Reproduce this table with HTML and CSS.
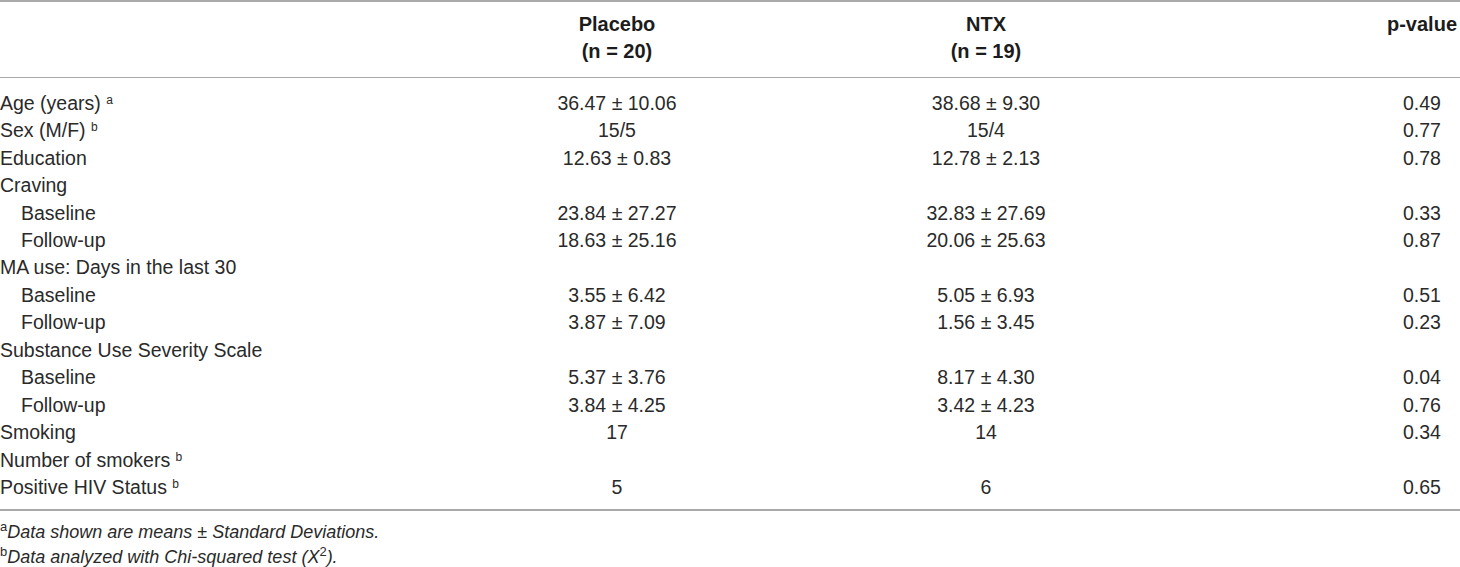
FILE: index.html
```html
<!DOCTYPE html>
<html lang="en">
<head>
<meta charset="utf-8">
<title>Table</title>
<link rel="stylesheet" href="styles.css">
</head>
<body>
<div class="wrap">
<table class="tbl">
  <colgroup>
    <col class="c-label">
    <col class="c-placebo">
    <col class="c-ntx">
    <col class="c-p">
  </colgroup>
  <thead>
    <tr>
      <th class="label"></th>
      <th>Placebo<br>(n = 20)</th>
      <th>NTX<br>(n = 19)</th>
      <th class="pv">p-value</th>
    </tr>
  </thead>
  <tbody>
    <tr class="first"><td class="label">Age (years) <sup>a</sup></td><td>36.47 ± 10.06</td><td>38.68 ± 9.30</td><td class="pv">0.49</td></tr>
    <tr><td class="label">Sex (M/F) <sup>b</sup></td><td>15/5</td><td>15/4</td><td class="pv">0.77</td></tr>
    <tr><td class="label">Education</td><td>12.63 ± 0.83</td><td>12.78 ± 2.13</td><td class="pv">0.78</td></tr>
    <tr><td class="label">Craving</td><td></td><td></td><td class="pv"></td></tr>
    <tr><td class="label sub">Baseline</td><td>23.84 ± 27.27</td><td>32.83 ± 27.69</td><td class="pv">0.33</td></tr>
    <tr><td class="label sub">Follow-up</td><td>18.63 ± 25.16</td><td>20.06 ± 25.63</td><td class="pv">0.87</td></tr>
    <tr><td class="label">MA use: Days in the last 30</td><td></td><td></td><td class="pv"></td></tr>
    <tr><td class="label sub">Baseline</td><td>3.55 ± 6.42</td><td>5.05 ± 6.93</td><td class="pv">0.51</td></tr>
    <tr><td class="label sub">Follow-up</td><td>3.87 ± 7.09</td><td>1.56 ± 3.45</td><td class="pv">0.23</td></tr>
    <tr><td class="label">Substance Use Severity Scale</td><td></td><td></td><td class="pv"></td></tr>
    <tr><td class="label sub">Baseline</td><td>5.37 ± 3.76</td><td>8.17 ± 4.30</td><td class="pv">0.04</td></tr>
    <tr><td class="label sub">Follow-up</td><td>3.84 ± 4.25</td><td>3.42 ± 4.23</td><td class="pv">0.76</td></tr>
    <tr><td class="label">Smoking</td><td>17</td><td>14</td><td class="pv">0.34</td></tr>
    <tr><td class="label">Number of smokers <sup>b</sup></td><td></td><td></td><td class="pv"></td></tr>
    <tr class="last"><td class="label">Positive HIV Status <sup>b</sup></td><td>5</td><td>6</td><td class="pv">0.65</td></tr>
  </tbody>
</table>
<div class="notes">
  <p><sup>a</sup>Data shown are means ± Standard Deviations.</p>
  <p><sup>b</sup>Data analyzed with Chi-squared test (X<sup>2</sup>).</p>
</div>
</div>
</body>
</html>
```

FILE: styles.css
```css
html, body {
  margin: 0;
  padding: 0;
  background: #ffffff;
}

body {
  font-family: "Liberation Sans", Arial, Helvetica, sans-serif;
  color: #2a2a2a;
}

.wrap {
  width: 1460px;
}

.tbl {
  width: 1460px;
  table-layout: fixed;
  border-collapse: collapse;
  font-size: 19.5px;
  border-top: 2px solid #a9a9a9;
  border-bottom: 2px solid #a9a9a9;
}

.c-label { width: 430px; }
.c-placebo { width: 374px; }
.c-ntx { width: 364px; }
.c-p { width: 292px; }

.tbl th {
  font-weight: bold;
  font-size: 20px;
  color: #1c1c1c;
  text-align: center;
  line-height: 27.4px;
  padding: 9px 0 11px;
  border-bottom: 1.5px solid #a9a9a9;
  vertical-align: top;
}

.tbl td {
  text-align: center;
  line-height: 27.43px;
  height: 27.43px;
  padding: 0;
  white-space: nowrap;
}

.tbl .label {
  text-align: left;
}

.tbl .sub {
  padding-left: 21px;
}

.tbl .pv {
  padding-left: 216px;
}

.tbl tr.first td {
  padding-top: 12px;
}

.tbl tr.last td {
  padding-bottom: 8px;
}

.tbl sup {
  font-size: 12px;
  vertical-align: 6px;
  line-height: 0;
}

.notes {
  font-style: italic;
  font-size: 18px;
  padding-top: 9px;
}

.notes p {
  margin: 0;
  line-height: 25px;
}

.notes sup {
  font-size: 13px;
  vertical-align: 7px;
  line-height: 0;
  font-style: normal;
}
```
